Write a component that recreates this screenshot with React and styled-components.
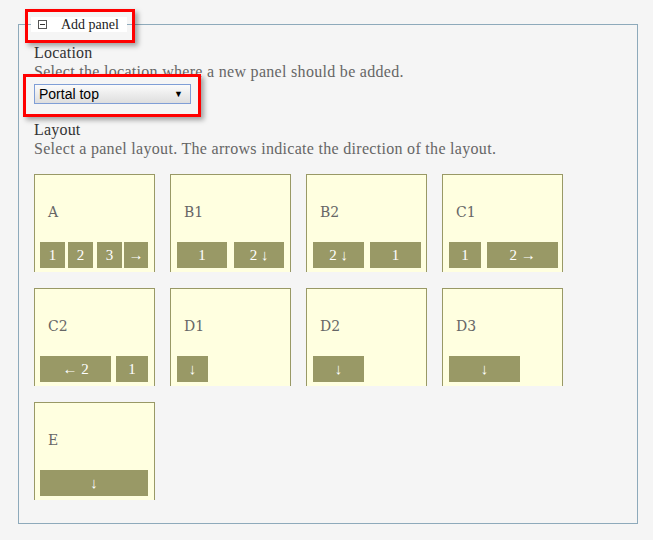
import React from 'react'
import { styled, createGlobalStyle } from 'styled-components'

const OLIVE = '#999966'
const TEXT_FONT = '"Liberation Serif", "Times New Roman", serif'

const GlobalStyle = createGlobalStyle`
  html, body {
    margin: 0;
    padding: 0;
    background: #f5f5f5;
  }
  body {
    font-family: ${TEXT_FONT};
  }
`

// each layout: offset of first block from card edge, then [text, width, gapBefore]
const LAYOUTS = [
  { name: 'A', start: 6, blocks: [['1', 25, 0], ['2', 25, 3], ['3', 25, 4], ['→', 24, 2]] },
  { name: 'B1', start: 7, blocks: [['1', 50, 0], ['2 ↓', 50, 7]] },
  { name: 'B2', start: 7, blocks: [['2 ↓', 51, 0], ['1', 51, 6]] },
  { name: 'C1', start: 7, blocks: [['1', 32, 0], ['2 →', 71, 6]] },
  { name: 'C2', start: 6, blocks: [['← 2', 71, 0], ['1', 32, 5]] },
  { name: 'D1', start: 7, blocks: [['↓', 31, 0]] },
  { name: 'D2', start: 7, blocks: [['↓', 51, 0]] },
  { name: 'D3', start: 7, blocks: [['↓', 71, 0]] },
  { name: 'E', start: 6, blocks: [['↓', 108, 0]] }
]

const Page = styled('div')`
  position: relative;
  padding: 17px 0 16px 18px;
`

const Fieldset = styled('fieldset')`
  box-sizing: border-box;
  width: 620px;
  margin: 0;
  padding: 11px 15px 23px;
  border: 1px solid #8eaabb;
`

const Legend = styled('legend')`
  display: flex;
  align-items: center;
  gap: 14px;
  margin-left: -3px;
  padding: 0 8px 0 7px;
  height: 15px;
  background: #fff;
  font-size: 14px;
  line-height: 15px;
  color: #222;
`

const Label = styled('div')`
  font-size: 16px;
  letter-spacing: 0.2px;
  line-height: 19px;
  color: #333;
  margin-top: ${({ $spaced }) => ($spaced ? '16px' : '0')};
`

const Help = styled('div')`
  font-size: 16px;
  letter-spacing: 0.3px;
  line-height: 19px;
  color: #666;
`

const SelectBox = styled('div')`
  box-sizing: border-box;
  display: flex;
  align-items: center;
  justify-content: space-between;
  width: 157px;
  height: 20px;
  margin-top: 3px;
  padding: 0 7px 0 4px;
  border: 1px solid #7f9ed6;
  background: linear-gradient(#fbfbfb, #dedede);
  font-family: "Liberation Sans", Arial, sans-serif;
  font-size: 14px;
  color: #000;
`

const Caret = styled('span')`
  font-size: 9px;
  line-height: 1;
`

const Grid = styled('div')`
  display: flex;
  flex-wrap: wrap;
  column-gap: 15px;
  row-gap: 16px;
  margin-top: 16px;
`

const Card = styled('div')`
  box-sizing: border-box;
  width: 121px;
  height: 98px;
  border: 1px solid ${OLIVE};
  border-bottom: none;
  background: #ffffe0;
  padding-top: 27px;
`

const CardTitle = styled('div')`
  padding-left: 13px;
  font-family: "DejaVu Serif", serif;
  font-size: 14px;
  line-height: 20px;
  color: #666;
`

const BlockRow = styled('div')`
  display: flex;
  margin-top: 20px;
  padding-left: ${({ $start }) => $start - 1}px;
`

const Block = styled('div')`
  display: flex;
  align-items: center;
  justify-content: center;
  height: 26px;
  width: ${({ $w }) => $w}px;
  margin-left: ${({ $gap }) => $gap}px;
  background: ${OLIVE};
  color: #fff;
  font-size: 15px;
  white-space: nowrap;
`

const Highlight = styled('div')`
  position: absolute;
  box-sizing: border-box;
  left: ${({ $x }) => $x}px;
  top: ${({ $y }) => $y}px;
  width: ${({ $w }) => $w}px;
  height: ${({ $h }) => $h}px;
  border: 3px solid #f00;
  box-shadow: 3px 3px 5px rgba(0, 0, 0, 0.35);
  pointer-events: none;
`

const CollapseIcon = () => (
  <svg width='9' height='9' viewBox='0 0 9 9'>
    <rect x='0.5' y='0.5' width='8' height='8' fill='#fff' stroke='#555' />
    <line x1='2' y1='4.5' x2='7' y2='4.5' stroke='#333' />
  </svg>
)

const LayoutCard = ({ name, start, blocks }) => (
  <Card>
    <CardTitle>{name}</CardTitle>
    <BlockRow $start={start}>
      {blocks.map(([text, w, gap], i) => (
        <Block key={i} $w={w} $gap={gap}>
          {text}
        </Block>
      ))}
    </BlockRow>
  </Card>
)

const App = () => (
  <Page>
    <GlobalStyle />
    <Fieldset>
      <Legend>
        <CollapseIcon />
        <span>Add panel</span>
      </Legend>
      <Label>Location</Label>
      <Help>Select the location where a new panel should be added.</Help>
      <SelectBox>
        <span>Portal top</span>
        <Caret>▼</Caret>
      </SelectBox>
      <Label $spaced>Layout</Label>
      <Help>Select a panel layout. The arrows indicate the direction of the layout.</Help>
      <Grid>
        {LAYOUTS.map(layout => (
          <LayoutCard key={layout.name} {...layout} />
        ))}
      </Grid>
    </Fieldset>
    <Highlight $x={25} $y={9} $w={110} $h={34} />
    <Highlight $x={23} $y={74} $w={178} $h={43} />
  </Page>
)

export default App
